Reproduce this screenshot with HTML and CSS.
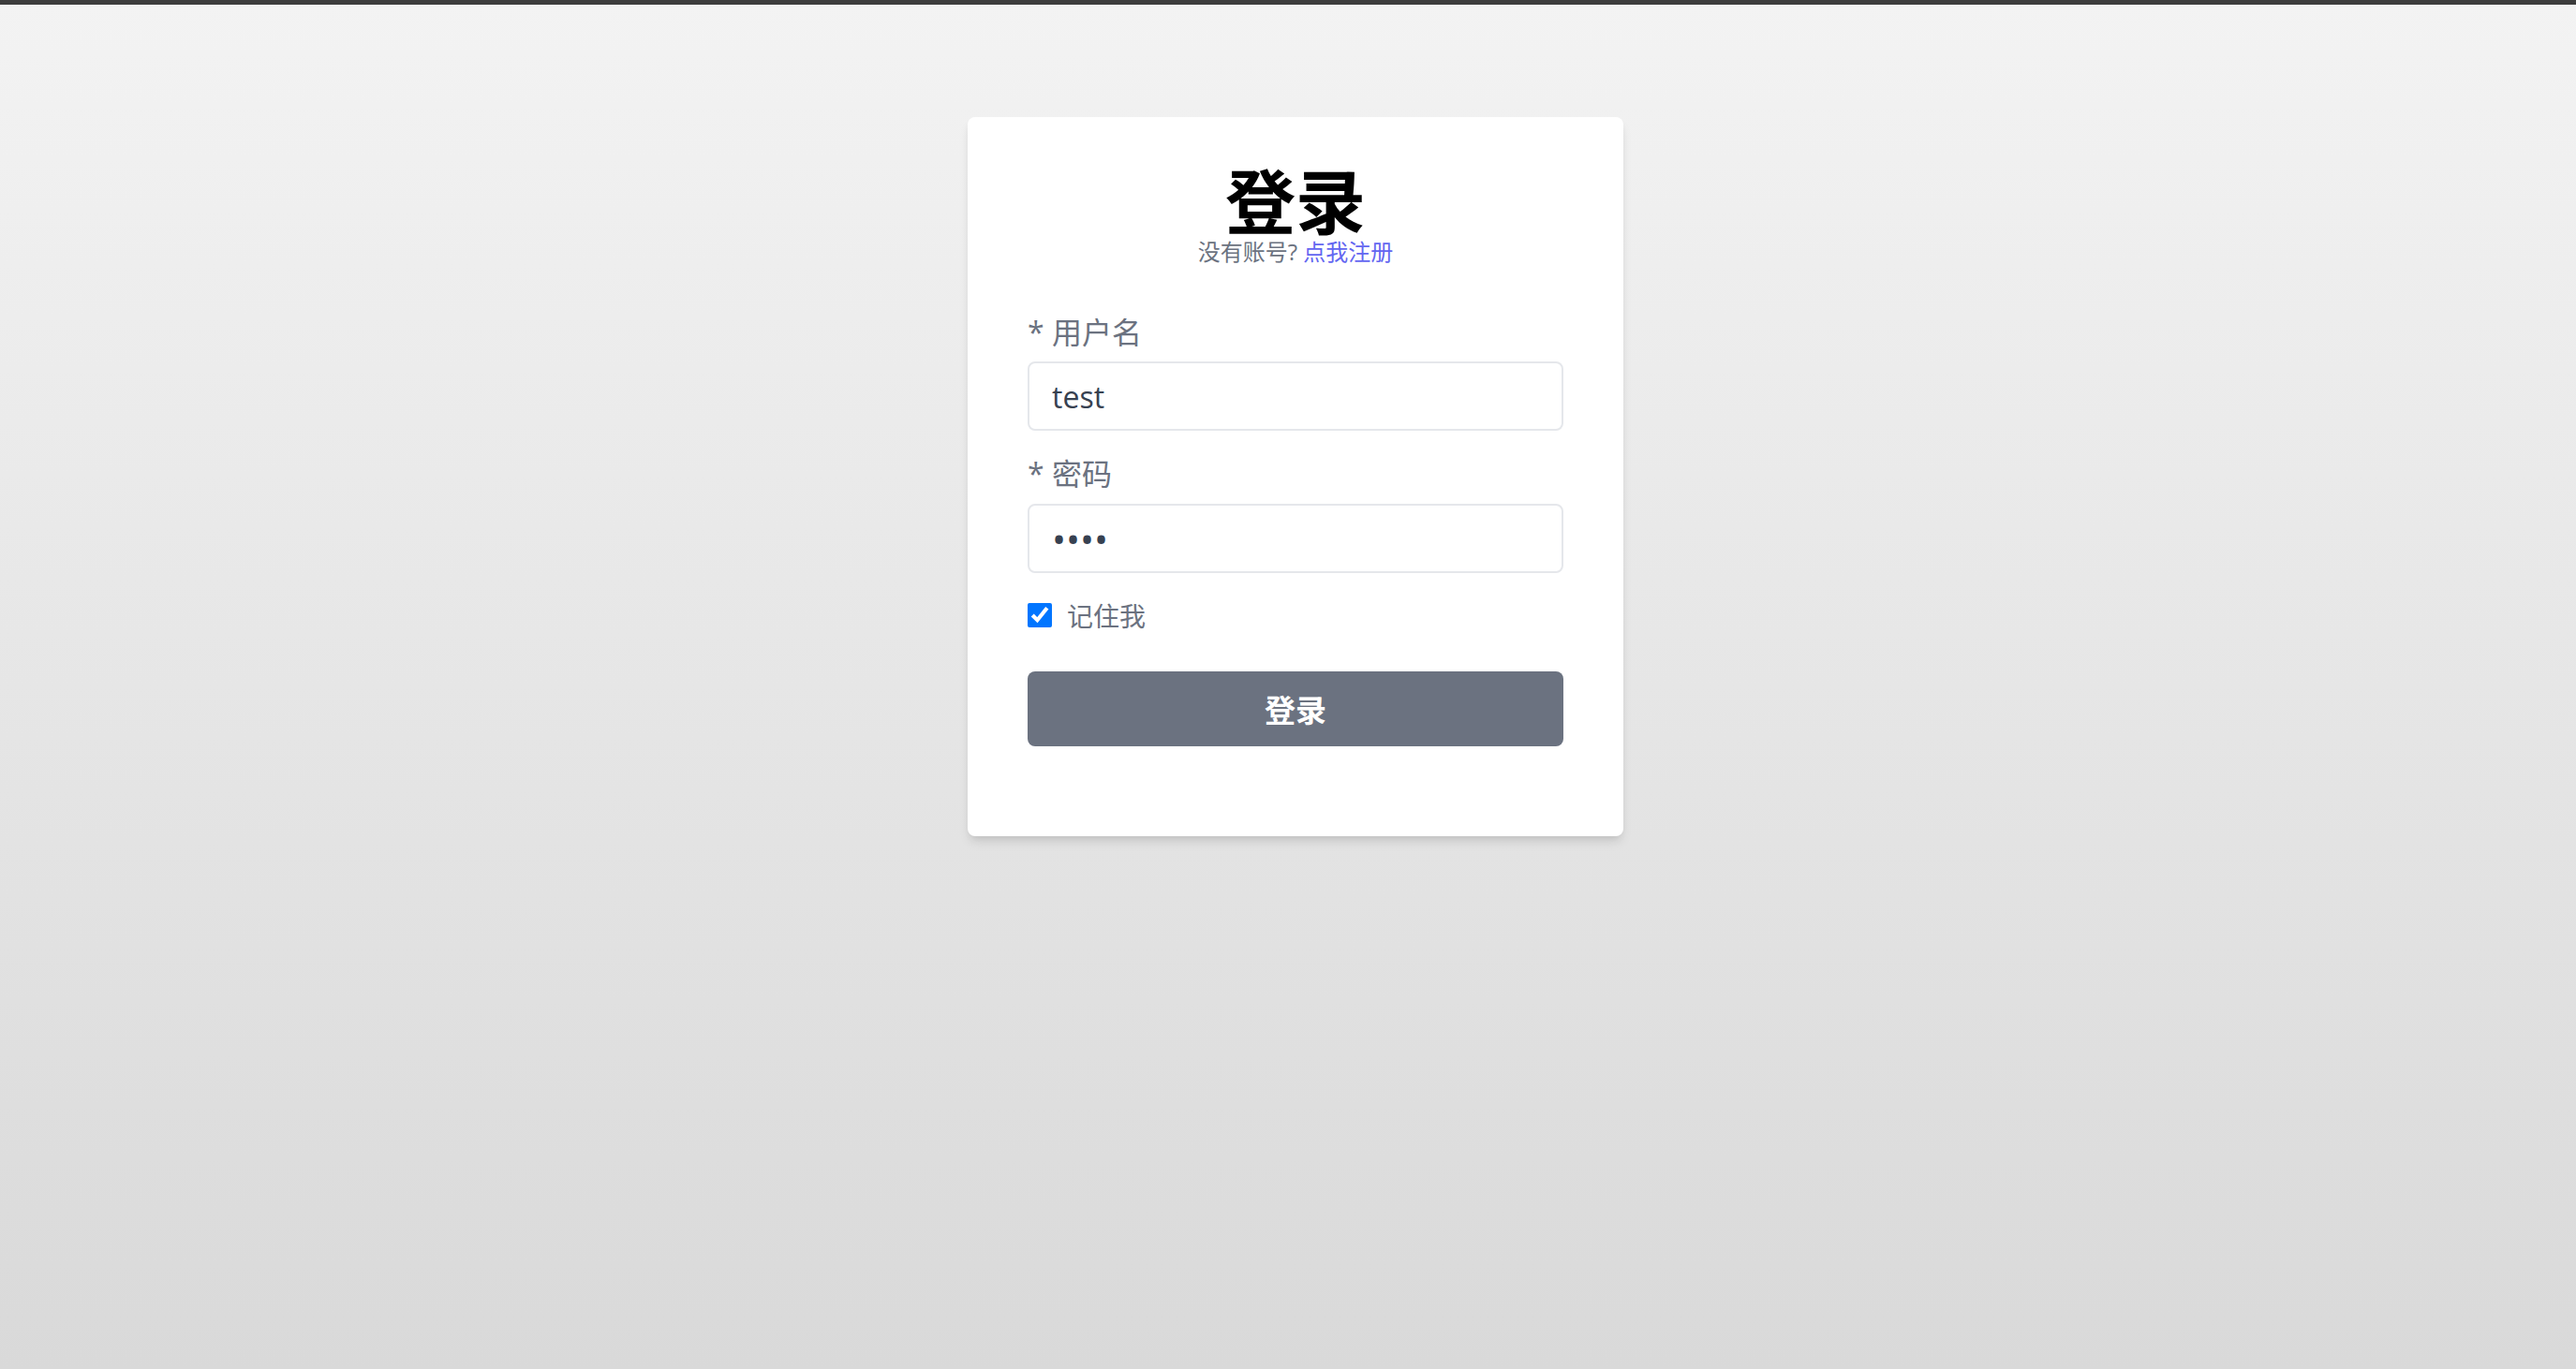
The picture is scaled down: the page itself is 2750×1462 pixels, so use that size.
FILE: index.html
```html
<!DOCTYPE html>
<html lang="zh-CN">
<head>
<meta charset="utf-8">
<title>登录</title>
<link rel="stylesheet" href="styles.css">
</head>
<body>
<div class="topbar"></div>
<main class="page">
  <section class="card">
    <h1 class="title">登录</h1>
    <p class="subtitle">没有账号? <a class="link" href="#">点我注册</a></p>
    <form class="form">
      <div class="field">
        <label class="label" for="username">* 用户名</label>
        <input class="input" id="username" type="text" value="test">
      </div>
      <div class="field">
        <label class="label" for="password">* 密码</label>
        <input class="input input-pass" id="password" type="password" value="1234">
      </div>
      <div class="remember">
        <input class="check" id="remember" type="checkbox" checked>
        <label class="remember-label" for="remember">记住我</label>
      </div>
      <button class="btn" type="button">登录</button>
    </form>
  </section>
</main>
</body>
</html>
```

FILE: styles.css
```css
html, body {
  margin: 0;
  padding: 0;
}
body {
  min-height: 100vh;
  background: linear-gradient(180deg, #f3f3f3 0%, #d9d9d9 100%);
  font-family: "Open Sans", "Noto Sans CJK SC", sans-serif;
}
.topbar {
  height: 5px;
  background: #3d3d3d;
}
.page {
  display: flex;
  justify-content: center;
  padding-top: 120px;
  padding-left: 16px;
}
.card {
  width: 700px;
  box-sizing: border-box;
  background: #fff;
  border-radius: 8px;
  box-shadow: 0 8px 12px -2px rgba(0,0,0,0.10), 0 4px 8px -4px rgba(0,0,0,0.10);
  padding: 49px 64px 96px;
}
.title {
  margin: 0;
  text-align: center;
  font-family: "Noto Sans CJK SC", sans-serif;
  font-size: 75px;
  line-height: 76px;
  font-weight: 700;
  color: #000;
}
.subtitle {
  margin: 3px 0 0;
  text-align: center;
  font-size: 24px;
  line-height: 32px;
  color: #6b7280;
}
.link {
  color: #6366f1;
  text-decoration: none;
}
.form {
  margin-top: 46px;
  display: flex;
  flex-direction: column;
}
.field {
  display: flex;
  flex-direction: column;
  margin-bottom: 22px;
}
.label {
  font-size: 32px;
  line-height: 48px;
  color: #6b7280;
  margin-bottom: 8px;
}
.field:first-child .label {
  margin-bottom: 7px;
}
.input {
  box-sizing: border-box;
  width: 100%;
  height: 74px;
  border: 2px solid #e5e7eb;
  border-radius: 8px;
  padding: 0 24px;
  font-family: "Open Sans", "Noto Sans CJK SC", sans-serif;
  font-size: 32px;
  color: #374151;
  background: #fff;
  outline: none;
}
.input-pass {
  font-size: 40px;
  letter-spacing: 0;
}
.remember {
  display: flex;
  align-items: center;
  height: 46px;
  gap: 16px;
}
.check {
  width: 26px;
  height: 26px;
  margin: 0;
  accent-color: #0075ff;
}
.remember-label {
  font-size: 28px;
  color: #6b7280;
}
.btn {
  margin-top: 37px;
  height: 80px;
  width: 100%;
  border: none;
  border-radius: 8px;
  background: #6b7280;
  color: #fff;
  font-family: "Noto Sans CJK SC", sans-serif;
  font-size: 33px;
  font-weight: 700;
}
```
